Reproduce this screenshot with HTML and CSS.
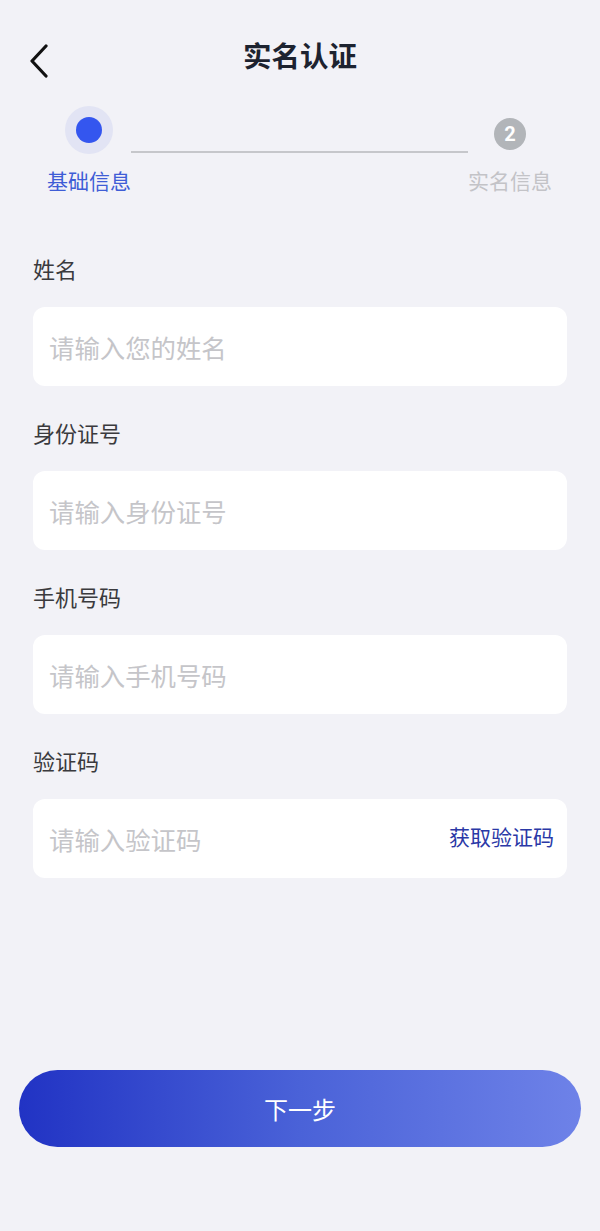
FILE: index.html
```html
<!DOCTYPE html>
<html lang="zh-CN">
<head>
<meta charset="utf-8">
<title>实名认证</title>
<link rel="stylesheet" href="styles.css">
</head>
<body>
<div class="page">
  <header class="header">
    <div class="back">
      <svg width="22" height="34" viewBox="0 0 22 34"><path d="M18 2 L4 17 L18 32" fill="none" stroke="#111" stroke-width="3.2" stroke-linecap="round" stroke-linejoin="round"/></svg>
    </div>
    <h1 class="title">实名认证</h1>
    <div></div>
  </header>

  <div class="stepper">
    <div class="step">
      <div class="dot-wrap"><div class="dot-outer"><div class="dot-inner"></div></div></div>
      <div class="step-label active">基础信息</div>
    </div>
    <div class="step-line"></div>
    <div class="step">
      <div class="dot-wrap"><div class="dot-num">2</div></div>
      <div class="step-label">实名信息</div>
    </div>
  </div>

  <form class="form">
    <div class="field">
      <div class="label">姓名</div>
      <div class="input"><span class="placeholder">请输入您的姓名</span></div>
    </div>
    <div class="field">
      <div class="label">身份证号</div>
      <div class="input"><span class="placeholder">请输入身份证号</span></div>
    </div>
    <div class="field">
      <div class="label">手机号码</div>
      <div class="input"><span class="placeholder">请输入手机号码</span></div>
    </div>
    <div class="field">
      <div class="label">验证码</div>
      <div class="input"><span class="placeholder">请输入验证码</span><span class="code-btn">获取验证码</span></div>
    </div>
  </form>

  <button class="next" type="button">下一步</button>
</div>
</body>
</html>
```

FILE: styles.css
```css
* { box-sizing: border-box; }
html, body { margin: 0; padding: 0; }
body {
  background: #f2f2f7;
  font-family: "Noto Sans CJK SC", "Noto Sans", sans-serif;
  color: #333;
}
.page {
  min-height: 1231px;
  display: flex;
  flex-direction: column;
  padding-bottom: 84px;
}
.header {
  display: grid;
  grid-template-columns: 1fr auto 1fr;
  align-items: center;
  height: 100px;
  padding-top: 10px;
}
.back {
  padding-left: 28px;
  display: flex;
  align-items: center;
  margin-top: 12px;
}
.title {
  margin: 0;
  font-size: 28.5px;
  font-weight: 700;
  line-height: 40px;
  color: #1d2330;
}
.stepper {
  display: flex;
  padding: 0 48px 0 47px;
  margin-top: 6px;
}
.step {
  width: 84px;
  display: flex;
  flex-direction: column;
  align-items: center;
}
.dot-wrap {
  height: 48px;
  display: flex;
  justify-content: center;
  align-items: flex-start;
}
.dot-outer {
  width: 48px;
  height: 48px;
  border-radius: 50%;
  background: #e2e4f4;
  display: flex;
  align-items: center;
  justify-content: center;
}
.dot-inner {
  width: 26px;
  height: 26px;
  border-radius: 50%;
  background: #3456ef;
}
.dot-num {
  margin-top: 12px;
  width: 32px;
  height: 32px;
  border-radius: 50%;
  background: #b2b5b9;
  color: #fff;
  font-family: "Roboto", "Noto Sans", sans-serif;
  font-weight: 700;
  font-size: 20px;
  line-height: 32px;
  text-align: center;
}
.step-line {
  flex: 1;
  height: 2px;
  background: #c6c7cb;
  margin-top: 45px;
}
.step-label {
  margin-top: 14px;
  font-size: 21px;
  line-height: 24px;
  color: #c3c3c7;
  white-space: nowrap;
}
.step-label.active { color: #3f5dd6; }
.form {
  margin: 63px 33px 0;
  display: flex;
  flex-direction: column;
  gap: 33px;
}
.field {
  display: flex;
  flex-direction: column;
  gap: 26px;
}
.label {
  font-size: 22px;
  line-height: 26px;
  color: #3a3a3d;
}
.input {
  height: 79px;
  background: #fff;
  border-radius: 12px;
  display: flex;
  align-items: center;
  justify-content: space-between;
  padding: 0 13px 0 16px;
}
.placeholder {
  font-size: 25.4px;
  color: #c5c5c9;
}
.code-btn {
  font-size: 21px;
  color: #2a38a6;
  margin-top: -6px;
}
.next {
  margin: auto 19px 0;
  height: 77px;
  border: none;
  border-radius: 39px;
  background: linear-gradient(90deg, #2133c4 0%, #4a62d8 50%, #6e82e8 100%);
  color: #fff;
  font-family: "Noto Sans CJK SC", "Noto Sans", sans-serif;
  font-size: 24px;
}
```
